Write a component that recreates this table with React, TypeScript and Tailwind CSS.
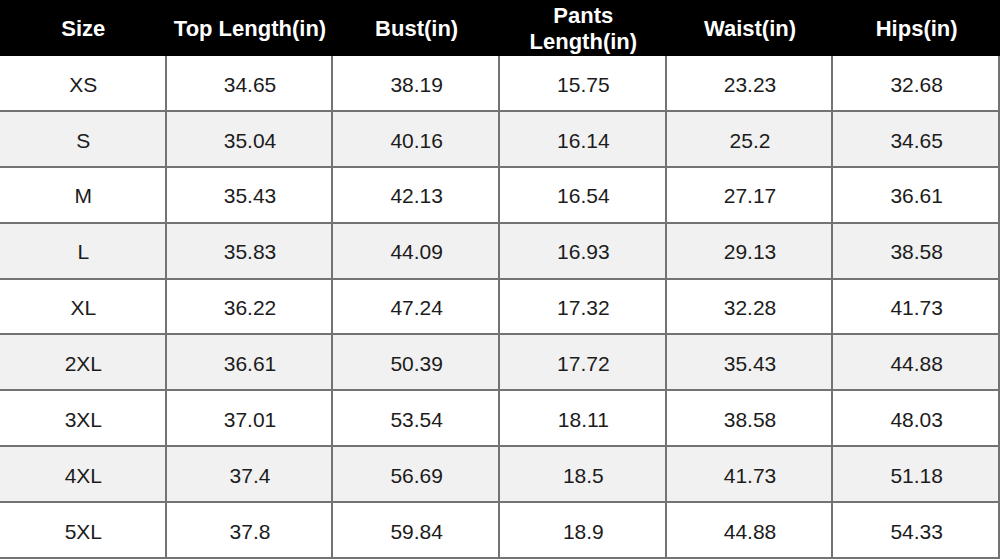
const headers = ["Size", "Top Length(in)", "Bust(in)", "Pants\nLength(in)", "Waist(in)", "Hips(in)"];

const rows: string[][] = [
    ["XS", "34.65", "38.19", "15.75", "23.23", "32.68"],
    ["S", "35.04", "40.16", "16.14", "25.2", "34.65"],
    ["M", "35.43", "42.13", "16.54", "27.17", "36.61"],
    ["L", "35.83", "44.09", "16.93", "29.13", "38.58"],
    ["XL", "36.22", "47.24", "17.32", "32.28", "41.73"],
    ["2XL", "36.61", "50.39", "17.72", "35.43", "44.88"],
    ["3XL", "37.01", "53.54", "18.11", "38.58", "48.03"],
    ["4XL", "37.4", "56.69", "18.5", "41.73", "51.18"],
    ["5XL", "37.8", "59.84", "18.9", "44.88", "54.33"],
];

const App = () => {
    return (
        <div className="w-[1000px] h-[559px] flex flex-col bg-white font-['Liberation_Sans',Arial,sans-serif] overflow-hidden">
            {/* header */}
            <div className="grid grid-cols-6 h-[56px] bg-black text-white">
                {headers.map((h) => (
                    <div key={h} className="flex items-center justify-center text-center text-[22px] font-bold leading-[26px] whitespace-pre-line pt-[1px]">
                        {h}
                    </div>
                ))}
            </div>

            {/* body */}
            <div className="flex-1 flex flex-col">
                {rows.map((r, i) => (
                    <div key={r[0]} className={`flex-1 grid grid-cols-6 border-b-2 border-[#737373] ${i % 2 === 1 ? "bg-[#f1f1f1]" : "bg-white"}`}>
                        {r.map((c, j) => (
                            <div key={j} className="flex items-center justify-center pt-[3px] pl-[2px] text-[21px] text-[#1c1c1c] border-r-2 border-[#737373]">
                                {c}
                            </div>
                        ))}
                    </div>
                ))}
            </div>
        </div>
    );
};

export default App;
